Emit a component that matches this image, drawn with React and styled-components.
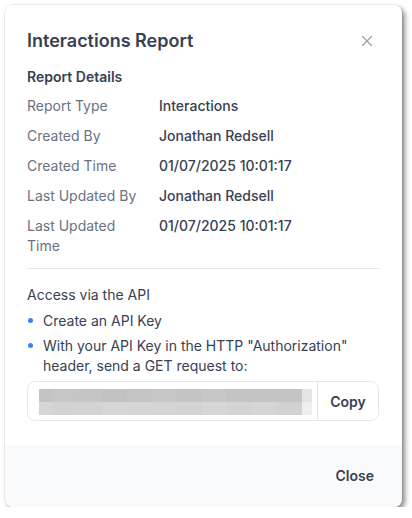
import React from 'react';
import styled, { createGlobalStyle } from 'styled-components';

const GlobalStyle = createGlobalStyle`
  body {
    margin: 0;
    background: #ffffff;
    font-family: Inter, "Noto Sans", sans-serif;
    -webkit-font-smoothing: antialiased;
  }
`;

const Dialog = styled.div`
  margin: 5px 0 0 5px;
  width: 397px;
  height: 502px;
  background: #ffffff;
  border-radius: 8px;
  box-shadow: 0 0 0 1px rgba(0, 0, 0, 0.05), 3px 3px 5px rgba(0, 0, 0, 0.45);
  display: flex;
  flex-direction: column;
  overflow: hidden;
`;

const Body = styled.div`
  flex: 1;
  padding: 22px 23px 0 22px;
  display: flex;
  flex-direction: column;
`;

const Header = styled.div`
  display: flex;
  align-items: center;
  justify-content: space-between;
`;

const Title = styled.h2`
  margin: 0;
  font-size: 18px;
  line-height: 28px;
  font-weight: 600;
  color: #374151;
`;

const CloseIcon = styled.button`
  border: 0;
  background: none;
  padding: 0;
  margin-right: 6px;
  display: flex;
  color: #9ca3af;
`;

const SectionTitle = styled.h3`
  margin: 12px 0 4px;
  font-size: 14px;
  line-height: 20px;
  font-weight: 600;
  color: #374151;
`;

const DetailRow = styled.div`
  display: grid;
  grid-template-columns: 120px 1fr;
  column-gap: 12px;
  padding: 5px 0;
  font-size: 14px;
  line-height: 20px;
`;

const Label = styled.div`
  color: #6b7280;
`;

const Value = styled.div`
  color: #374151;
  font-weight: 500;
`;

const Divider = styled.hr`
  border: 0;
  border-top: 1px solid #e5e7eb;
  margin: 7px 0 16px;
`;

const AccessTitle = styled.div`
  font-size: 14px;
  line-height: 20px;
  color: #374151;
`;

const Bullets = styled.ul`
  list-style: none;
  margin: 6px 0 0;
  padding: 0;
  display: flex;
  flex-direction: column;
  gap: 5px;
`;

const Bullet = styled.li`
  position: relative;
  padding-left: 16px;
  font-size: 14px;
  line-height: 20px;
  color: #374151;
  &::before {
    content: '';
    position: absolute;
    left: 1px;
    top: 7px;
    width: 5px;
    height: 5px;
    border-radius: 50%;
    background: #3b82f6;
  }
`;

const UrlBox = styled.div`
  margin-top: 5px;
  height: 40px;
  box-sizing: border-box;
  border: 1px solid #e5e7eb;
  border-radius: 8px;
  display: flex;
  align-items: stretch;
`;

const Redacted = styled.div`
  flex: 1;
  min-width: 0;
  overflow: hidden;
  padding: 7px 0 0 11px;
  display: flex;
  flex-direction: column;
`;

const PixelRow = styled.div`
  display: flex;
  height: 13px;
`;

const Pixel = styled.div`
  flex: none;
  width: ${p => p.w}px;
  background: ${p => p.c};
`;

const CopyButton = styled.button`
  flex: none;
  border: 0;
  border-left: 1px solid #e5e7eb;
  background: none;
  width: 61px;
  font-family: inherit;
  font-size: 14px;
  font-weight: 600;
  color: #374151;
`;

const Footer = styled.div`
  height: 62px;
  background: #f9fafb;
  display: flex;
  align-items: center;
  justify-content: flex-end;
  padding-right: 16px;
`;

const FooterButton = styled.button`
  border: 0;
  background: none;
  padding: 8px 12px;
  font-family: inherit;
  font-size: 14px;
  line-height: 20px;
  font-weight: 600;
  color: #374151;
`;

const details = [
  ['Report Type', 'Interactions'],
  ['Created By', 'Jonathan Redsell'],
  ['Created Time', '01/07/2025 10:01:17'],
  ['Last Updated By', 'Jonathan Redsell'],
  ['Last Updated Time', '01/07/2025 10:01:17'],
];

const topRow = [
  [13, '#c3c3c3'], [25, '#c6c6c6'], [25, '#c5c5c5'], [25, '#c2c2c2'], [25, '#c5c5c5'],
  [25, '#c6c6c6'], [25, '#c4c4c4'], [25, '#c7c7c7'], [25, '#c4c4c4'], [23, '#c3c3c3'],
  [27, '#c4c4c4'], [10, '#e4e4e4'],
];
const bottomRow = [
  [13, '#d6d6d6'], [25, '#d2d2d2'], [25, '#d3d3d3'], [25, '#d6d6d6'], [25, '#d5d5d5'],
  [25, '#d4d4d4'], [25, '#d3d3d3'], [25, '#d6d6d6'], [25, '#d3d3d3'], [23, '#d5d5d5'],
  [27, '#d2d2d2'], [10, '#efefef'],
];

export default function App() {
  return (
    <>
      <GlobalStyle />
      <Dialog>
        <Body>
          <Header>
            <Title>Interactions Report</Title>
            <CloseIcon aria-label="Close">
              <svg width="12" height="12" viewBox="0 0 12 12" fill="none" stroke="currentColor" strokeWidth="1.4" strokeLinecap="round">
                <path d="M1.5 1.5l9 9M10.5 1.5l-9 9" />
              </svg>
            </CloseIcon>
          </Header>
          <SectionTitle>Report Details</SectionTitle>
          {details.map(([label, value]) => (
            <DetailRow key={label}>
              <Label>{label}</Label>
              <Value>{value}</Value>
            </DetailRow>
          ))}
          <Divider />
          <AccessTitle>Access via the API</AccessTitle>
          <Bullets>
            <Bullet>Create an API Key</Bullet>
            <Bullet>With your API Key in the HTTP "Authorization" header, send a GET request to:</Bullet>
          </Bullets>
          <UrlBox>
            <Redacted>
              <PixelRow>
                {topRow.map(([w, c], i) => <Pixel key={i} w={w} c={c} />)}
              </PixelRow>
              <PixelRow>
                {bottomRow.map(([w, c], i) => <Pixel key={i} w={w} c={c} />)}
              </PixelRow>
            </Redacted>
            <CopyButton>Copy</CopyButton>
          </UrlBox>
        </Body>
        <Footer>
          <FooterButton>Close</FooterButton>
        </Footer>
      </Dialog>
    </>
  );
}
